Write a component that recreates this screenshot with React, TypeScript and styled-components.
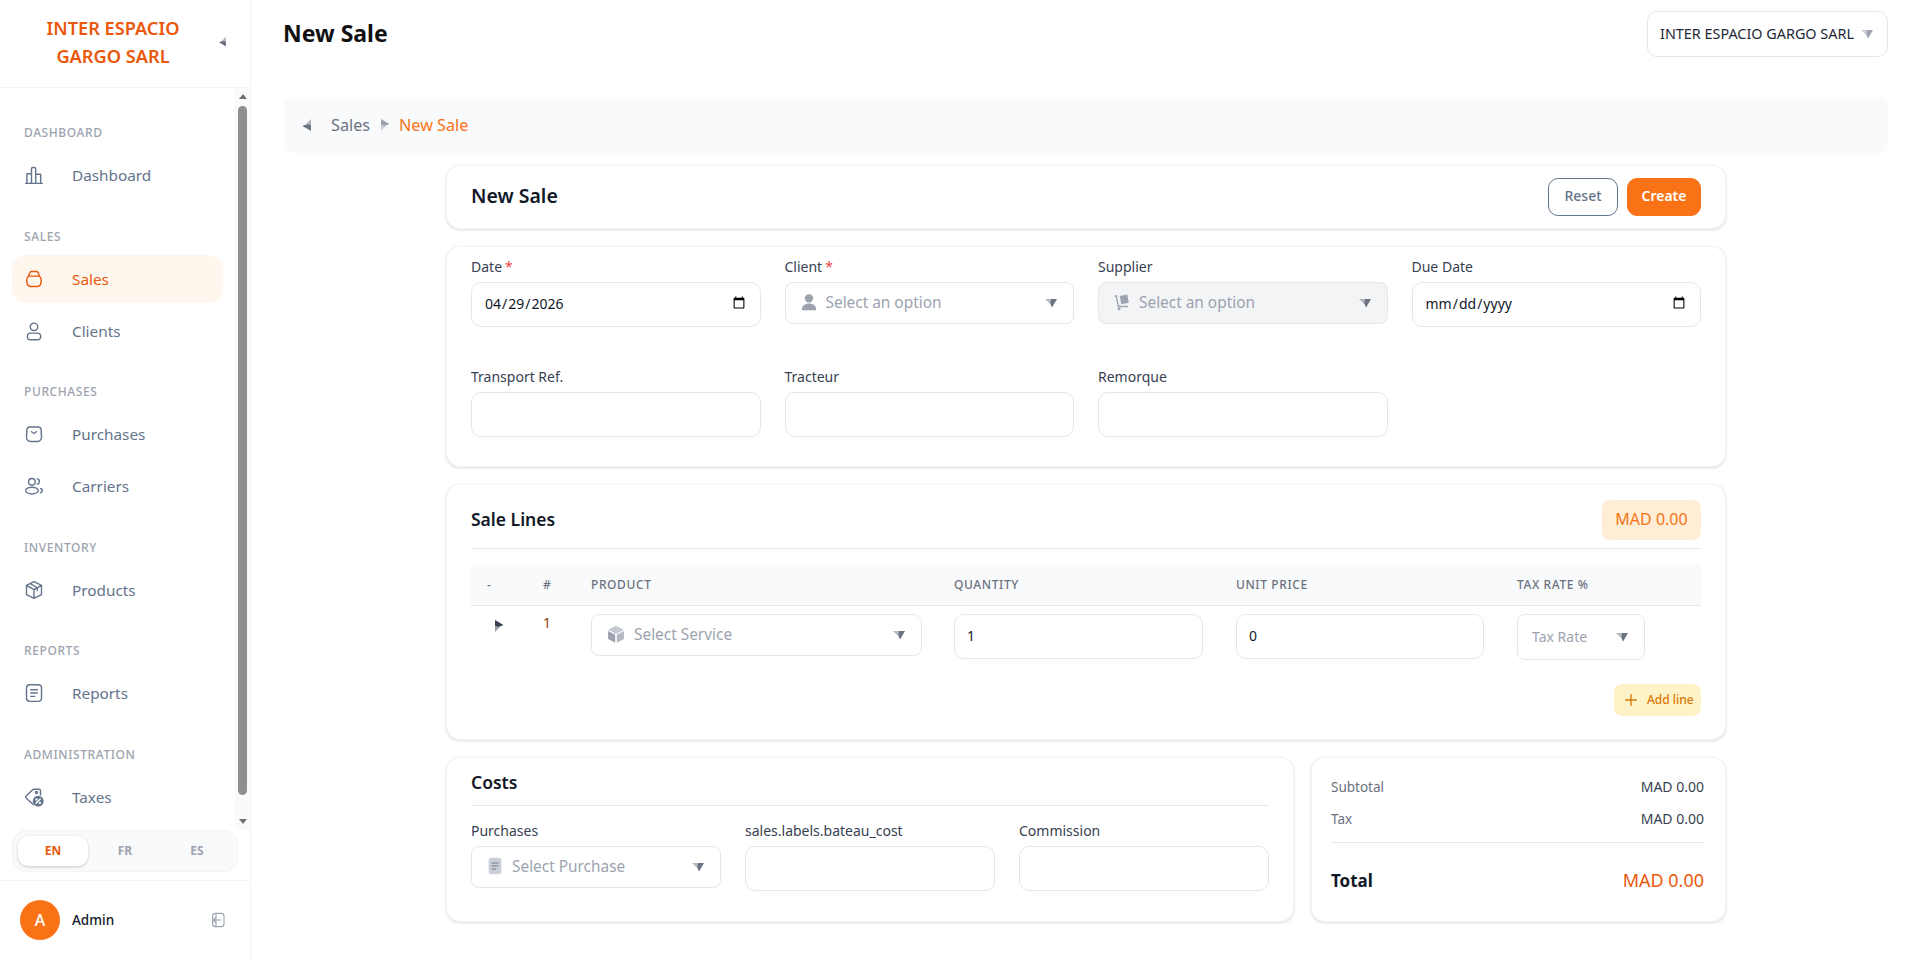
import React from "react";
import styled, { createGlobalStyle } from "styled-components";

const orange = "#f97316";
const deepOrange = "#ea580c";
const line = "#e5e7eb";

const GlobalStyle = createGlobalStyle`
  * { box-sizing: border-box; }
  html, body { margin: 0; padding: 0; background: #fff; }
  body {
    font-family: "Noto Sans", "Open Sans", Arial, sans-serif;
    color: #111827;
    overflow: hidden;
  }
`;

const Page = styled.div`
  display: flex;
  height: 970px;
  background: #fff;
`;

const Sidebar = styled.aside`
  display: flex;
  flex-direction: column;
  flex: 0 0 251px;
  height: 960px;
  border-right: 1px solid #f3f4f6;
`;

const Brand = styled.div`
  display: flex;
  align-items: center;
  height: 88px;
  flex: 0 0 88px;
  padding: 0 20px 4px 9px;
  border-bottom: 1px solid #f3f4f6;
`;

const BrandName = styled.div`
  flex: 1;
  text-align: center;
  font-size: 18.200px;
  line-height: 28px;
  font-weight: 600;
  color: ${deepOrange};
`;

const NavArea = styled.div`
  display: flex;
  height: 742px;
  flex: 0 0 742px;
`;

const Scroller = styled.nav`
  flex: 1;
  min-width: 0;
  overflow: hidden;
  padding: 37px 12px 0;
`;

const Rail = styled.div`
  display: grid;
  grid-template-rows: 17px 1fr 17px;
  justify-items: center;
  align-items: center;
  flex: 0 0 15px;
  background: #fafafa;
`;

const RailThumb = styled.div`
  align-self: start;
  width: 9px;
  height: 689px;
  margin-top: 1px;
  border-radius: 5px;
  background: #8f8f8f;
`;

const RailArrow = styled.div<{ $down?: boolean }>`
  width: 0;
  height: 0;
  border-left: 4.500px solid transparent;
  border-right: 4.500px solid transparent;
  border-top: ${(p) => (p.$down ? "5px solid #6f6f6f" : "0")};
  border-bottom: ${(p) => (p.$down ? "0" : "5px solid #6f6f6f")};
`;

const Section = styled.div`
  margin-bottom: 29.600px;
`;

const SectionLabel = styled.div`
  padding-left: 12px;
  margin-bottom: 10px;
  height: 16px;
  line-height: 16px;
  font-size: 12px;
  font-weight: 500;
  letter-spacing: 0.05em;
  color: #9ca3af;
`;

const NavItem = styled.a<{ $active?: boolean }>`
  display: flex;
  align-items: center;
  gap: 28px;
  width: 211px;
  height: 48px;
  margin-bottom: 4px;
  padding-left: 12px;
  border-radius: 14px;
  font-size: 15.300px;
  color: ${(p) => (p.$active ? deepOrange : "#64748b")};
  background: ${(p) => (p.$active ? "#fff7ed" : "transparent")};
`;

const LangBar = styled.div`
  display: grid;
  grid-template-columns: repeat(3, 70px);
  gap: 2px;
  height: 42px;
  margin: 0 12px;
  padding: 5px;
  width: 226px;
  flex: 0 0 42px;
  border: 1px solid #f3f4f6;
  border-radius: 14px;
  background: #f9fafb;
`;

const LangButton = styled.div<{ $active?: boolean }>`
  display: flex;
  align-items: center;
  justify-content: center;
  padding-bottom: 2px;
  border-radius: 10px;
  font-size: 12px;
  font-weight: 700;
  color: ${(p) => (p.$active ? deepOrange : "#9ca3af")};
  background: ${(p) => (p.$active ? "#fff" : "transparent")};
  box-shadow: ${(p) => (p.$active ? "0 1px 3px rgba(0,0,0,0.2)" : "none")};
`;

const UserRow = styled.div`
  display: flex;
  align-items: center;
  height: 80px;
  margin-top: 8px;
  padding: 0 24px 2px 20px;
  border-top: 1px solid #f3f4f6;
`;

const Avatar = styled.div`
  display: flex;
  align-items: center;
  justify-content: center;
  width: 40px;
  height: 40px;
  border-radius: 50%;
  background: ${orange};
  color: #fff;
  font-size: 16px;
  font-weight: 500;
`;

const UserName = styled.div`
  flex: 1;
  margin-left: 12px;
  font-size: 13.500px;
  font-weight: 500;
  color: #111827;
`;

const Main = styled.main`
  flex: 1;
  min-width: 0;
  padding: 11px 29px 0 33px;
`;

const TopRow = styled.div`
  display: flex;
  justify-content: space-between;
  height: 86px;
`;

const PageTitle = styled.h1`
  margin: 6px 0 0 -1px;
  font-size: 23px;
  line-height: 32px;
  font-weight: 700;
  color: #111;
`;

const CompanySelect = styled.div`
  display: flex;
  align-items: center;
  justify-content: space-between;
  width: 241px;
  height: 46px;
  padding: 0 12px 2px 12px;
  border: 1px solid ${line};
  border-radius: 10px;
  font-size: 14.400px;
  color: #1f2937;
`;

const Crumbs = styled.div`
  display: flex;
  align-items: center;
  gap: 6px;
  height: 56px;
  padding-left: 16px;
  border-radius: 8px;
  background: #f9fafb;
  font-size: 16.200px;
  color: #6b7280;
`;

const CrumbLink = styled.span`
  margin-left: 9px;
`;

const CrumbCurrent = styled.span`
  margin-left: 1px;
  color: ${orange};
`;

const Content = styled.div`
  display: flex;
  flex-direction: column;
  gap: 17px;
  width: 1280px;
  margin: 12px auto 0;
`;

const Card = styled.section`
  border: 1px solid #f3f4f6;
  border-radius: 14px;
  background: #fff;
  box-shadow: 0 1px 3px rgba(0, 0, 0, 0.14);
`;

const HeaderCard = styled(Card)`
  display: flex;
  align-items: center;
  justify-content: space-between;
  height: 64px;
  padding: 0 24px;
`;

const CardTitle = styled.h2`
  margin: 0 0 4px;
  font-size: 19.500px;
  font-weight: 600;
  color: #111827;
`;

const Actions = styled.div`
  display: flex;
  gap: 9px;
`;

const Button = styled.button<{ $primary?: boolean }>`
  height: 38px;
  padding: 0 0 3px;
  width: ${(p) => (p.$primary ? "74px" : "70px")};
  border: 1px solid ${(p) => (p.$primary ? orange : "#64748b")};
  border-radius: 10px;
  background: ${(p) => (p.$primary ? orange : "#fff")};
  color: ${(p) => (p.$primary ? "#fff" : "#64748b")};
  font-family: inherit;
  font-size: 14px;
  font-weight: ${(p) => (p.$primary ? 600 : 500)};
`;

const FormCard = styled(Card)`
  display: grid;
  grid-template-columns: repeat(4, 1fr);
  column-gap: 24px;
  row-gap: 40px;
  padding: 10px 24px 29px;
`;

const Label = styled.label`
  display: block;
  height: 20px;
  margin-bottom: 5px;
  font-size: 14px;
  line-height: 20px;
  color: #374151;
`;

const Required = styled.span`
  color: #ef4444;
  margin-left: 3px;
`;

const TextInput = styled.input`
  display: block;
  width: 100%;
  height: 45px;
  padding: 0 12px 3px;
  border: 1px solid ${line};
  border-radius: 10px;
  background: #fff;
  color: #111827;
  font-family: inherit;
  font-size: 14px;
  outline: none;
`;

const SelectBox = styled.div<{ $disabled?: boolean; $tall?: boolean }>`
  display: flex;
  align-items: center;
  gap: 8px;
  width: 100%;
  height: ${(p) => (p.$tall ? "46px" : "42px")};
  padding: 0 14px 2px 14px;
  border: 1px solid ${line};
  border-radius: 8px;
  background: ${(p) => (p.$disabled ? "#f3f4f6" : "#fff")};
  font-size: ${(p) => (p.$tall ? "14px" : "15.400px")};
  color: #9ca3af;
`;

const SelectText = styled.span`
  flex: 1;
`;

const LinesCard = styled(Card)`
  height: 256px;
  padding: 15px 24px 0;
`;

const CardHead = styled.div`
  display: flex;
  align-items: center;
  justify-content: space-between;
  height: 49px;
  border-bottom: 1px solid ${line};
  padding-bottom: 8px;
`;

const SectionTitle = styled.h3`
  margin: 0 0 2px;
  font-size: 17.500px;
  font-weight: 600;
  color: #111827;
`;

const TotalBadge = styled.div`
  display: flex;
  align-items: center;
  justify-content: center;
  width: 99px;
  height: 40px;
  padding-bottom: 2px;
  border-radius: 8px;
  background: #ffedd5;
  color: ${orange};
  font-size: 16px;
`;

const LinesGrid = styled.div`
  display: grid;
  grid-template-columns: 56px 64px 363px 282px 281px 184px;
`;

const HeadRow = styled(LinesGrid)`
  height: 41px;
  margin-top: 16px;
  padding-bottom: 2px;
  align-items: center;
  background: #f9fafb;
  border-bottom: 1px solid ${line};
  font-size: 12px;
  font-weight: 500;
  letter-spacing: 0.05em;
  color: #6b7280;
`;

const HeadCell = styled.div<{ $pad?: boolean }>`
  padding-left: ${(p) => (p.$pad ? "16px" : "0")};
`;

const BodyRow = styled(LinesGrid)`
  padding-top: 8px;
`;

const ExpandCell = styled.div`
  padding: 3px 0 0 19px;
`;

const IndexCell = styled.div`
  padding: 0 0 0 16px;
  font-size: 14px;
  line-height: 18px;
  color: #92400e;
`;

const FieldCell = styled.div<{ $width: number }>`
  width: ${(p) => p.$width}px;
`;

const AddRow = styled.div`
  display: flex;
  justify-content: flex-end;
  margin-top: 24px;
`;

const AddButton = styled.button`
  display: flex;
  align-items: center;
  gap: 8px;
  width: 87px;
  height: 32px;
  padding: 0 0 1px 9px;
  border: 0;
  border-radius: 8px;
  background: #fef3c7;
  color: #d97706;
  font-family: inherit;
  font-size: 12px;
  font-weight: 500;
`;

const BottomRow = styled.div`
  display: flex;
  gap: 17px;
`;

const CostsCard = styled(Card)`
  flex: 0 0 848px;
  height: 165px;
  padding: 9px 24px 0;
`;

const CostsHead = styled.div`
  display: flex;
  align-items: center;
  height: 39px;
  padding-bottom: 6px;
  border-bottom: 1px solid ${line};
`;

const CostsGrid = styled.div`
  display: grid;
  grid-template-columns: repeat(3, 1fr);
  gap: 24px;
  margin-top: 15px;
`;

const TotalsCard = styled(Card)`
  flex: 1;
  height: 165px;
  padding: 13px 21px 0 19px;
`;

const TotalLine = styled.div`
  display: flex;
  align-items: center;
  justify-content: space-between;
  height: 32px;
  padding-bottom: 1px;
  font-size: 14px;
  color: #374151;
`;

const TotalName = styled.span`
  font-size: 13.500px;
  color: #6b7280;
`;

const GrandLine = styled.div`
  display: flex;
  align-items: center;
  justify-content: space-between;
  height: 38px;
  margin-top: 18px;
  font-size: 18px;
  color: ${deepOrange};
`;

const GrandName = styled.span`
  font-size: 17px;
  font-weight: 700;
  color: #111827;
`;

const TotalsRule = styled.div`
  height: 1px;
  margin-top: 7px;
  background: ${line};
`;

const CaretSvg = styled.svg<{ $rot: number }>`
  flex: none;
  transform: rotate(${(p) => p.$rot}deg);
`;

// two-tone caret, the lighter wedge sits on the leading side
function Caret({ dir, size = 16, color = "#6b7280" }: { dir: "left" | "right" | "down"; size?: number; color?: string }) {
  const rot = dir === "down" ? 0 : dir === "right" ? -90 : 90;
  return (
    <CaretSvg $rot={rot} width={size} height={size} viewBox="0 0 24 24">
      <path d="M3 7.500h10l-2 7.500z" fill={color} opacity="0.5" />
      <path d="M21 7.500h-9l-1 6.500 2 5.500c.3.4.7.4 1 0z" fill={color} />
    </CaretSvg>
  );
}

const Icon = styled.svg`
  flex: none;
  fill: none;
  stroke: currentColor;
  stroke-width: 1.7;
  stroke-linecap: round;
  stroke-linejoin: round;
`;

function BarsIcon() {
  return (
    <Icon width="20" height="20" viewBox="0 0 24 24">
      <path d="M2 22h20M3.500 22V10.500h5.500V22M9 22V4.500c0-1 .5-1.500 1.500-1.500h2c1 0 1.500.5 1.500 1.500V22M14 22V11h6v11" />
    </Icon>
  );
}

function BasketIcon() {
  return (
    <Icon width="20" height="20" viewBox="0 0 24 24">
      <path d="M6 8.500C3.500 9.500 3 12 3.500 16c.4 3 2 5 5 5h7c3 0 4.600-2 5-5 .5-4 0-6.500-2.500-7.500M5.500 8.500h13L17 4.500c-.3-.8-1-1.500-2-1.500H9c-1 0-1.700.7-2 1.500z" />
    </Icon>
  );
}

function UserIcon() {
  return (
    <Icon width="20" height="20" viewBox="0 0 24 24">
      <circle cx="12" cy="7" r="4.500" />
      <rect x="4" y="14.500" width="16" height="8" rx="4" />
    </Icon>
  );
}

function BagIcon() {
  return (
    <Icon width="20" height="20" viewBox="0 0 24 24">
      <path d="M7 3.500h10c2 0 3.200 1 3.500 3l.5 9c.2 3-1.800 5.500-5 5.500H8c-3.200 0-5.200-2.500-5-5.500l.5-9c.3-2 1.500-3 3.500-3z" />
      <path d="M9 9c.8 1.500 1.800 2 3 2s2.200-.5 3-2" />
    </Icon>
  );
}

function UsersIcon() {
  return (
    <Icon width="20" height="20" viewBox="0 0 24 24">
      <circle cx="9.500" cy="7" r="4" />
      <ellipse cx="9.500" cy="17.500" rx="7.500" ry="4" />
      <path d="M16 3.500c1.500.3 2.500 1.700 2.500 3.200s-1 2.800-2.500 3.200M20 15c1.300.5 2 1.500 2 2.500s-.7 2-2 2.500" />
    </Icon>
  );
}

function BoxIcon() {
  return (
    <Icon width="20" height="20" viewBox="0 0 24 24">
      <path d="M12 2l9 4.500v11L12 22l-9-4.500v-11zM3 6.500l9 5 9-5M12 11.500V22M7.500 4.300l8.500 5v3.200" />
    </Icon>
  );
}

function ReportIcon() {
  return (
    <Icon width="20" height="20" viewBox="0 0 24 24">
      <rect x="3" y="2" width="18" height="20" rx="4" />
      <path d="M8 8h8M8 12h8M8 16h5" />
    </Icon>
  );
}

function TaxIcon() {
  return (
    <Icon width="20" height="20" viewBox="0 0 24 24">
      <path d="M11 21L2.500 13.200c-.7-.7-.7-1.600 0-2.300L10 3.500c.6-.6 1.200-.8 2-.8h6c1 0 1.800.8 1.800 1.800v5" />
      <circle cx="15" cy="6.500" r="1.300" />
      <circle cx="17" cy="17" r="6.500" fill="currentColor" stroke="none" />
      <path d="M14.500 19.500l5-5" stroke="#fff" />
      <circle cx="15" cy="15" r=".6" stroke="#fff" />
      <circle cx="19" cy="19" r=".6" stroke="#fff" />
    </Icon>
  );
}

const LogoutSvg = styled(Icon)`
  color: #9ca3af;
`;

function LogoutIcon() {
  return (
    <LogoutSvg width="16" height="16" viewBox="0 0 24 24">
      <rect x="4" y="2" width="17" height="20" rx="4" />
      <path d="M9 2v20" />
      <path d="M16 12H5M8 9l-3 3 3 3" />
    </LogoutSvg>
  );
}

const SolidIcon = styled.svg`
  flex: none;
`;

function PersonGlyph() {
  return (
    <SolidIcon width="18" height="18" viewBox="0 0 24 24" fill="#9ca3af">
      <circle cx="12" cy="7" r="5.500" />
      <path d="M2.500 22c0-5 4-8 9.500-8s9.500 3 9.500 8c0 .6-.4 1-1 1h-17c-.6 0-1-.4-1-1z" />
    </SolidIcon>
  );
}

function TrolleyGlyph() {
  return (
    <SolidIcon width="18" height="18" viewBox="0 0 24 24" fill="#9ca3af">
      <path d="M2 3h3l3 14h12v2H6.500L3.500 5H2z" />
      <circle cx="8" cy="21" r="2" />
      <path d="M9 4l10-2 2 11-10 2z" />
    </SolidIcon>
  );
}

function CubeGlyph() {
  return (
    <SolidIcon width="20" height="20" viewBox="0 0 24 24">
      <path d="M12 2l9.500 5L12 12 2.500 7z" fill="#c4c9d1" />
      <path d="M2.500 8.500L11 13v9.500l-8.500-4.500z" fill="#9ca3af" />
      <path d="M13 13l8.500-4.500V18L13 22.500z" fill="#b4bac4" />
    </SolidIcon>
  );
}

function DocGlyph() {
  return (
    <SolidIcon width="18" height="18" viewBox="0 0 24 24">
      <rect x="3.500" y="1" width="17" height="22" rx="4" fill="#cbd0d8" />
      <path d="M8 8h8M8 12h8M8 16h5" stroke="#8f96a3" strokeWidth="2" strokeLinecap="round" />
    </SolidIcon>
  );
}

function PlusIcon() {
  return (
    <svg width="16" height="16" viewBox="0 0 24 24" fill="none" stroke="#d97706" strokeWidth="2" strokeLinecap="round">
      <path d="M12 4v16M4 12h16" />
    </svg>
  );
}

const navSections = [
  { label: "DASHBOARD", items: [{ name: "Dashboard", icon: <BarsIcon /> }] },
  { label: "SALES", items: [{ name: "Sales", icon: <BasketIcon />, active: true }, { name: "Clients", icon: <UserIcon /> }] },
  { label: "PURCHASES", items: [{ name: "Purchases", icon: <BagIcon /> }, { name: "Carriers", icon: <UsersIcon /> }] },
  { label: "INVENTORY", items: [{ name: "Products", icon: <BoxIcon /> }] },
  { label: "REPORTS", items: [{ name: "Reports", icon: <ReportIcon /> }] },
  { label: "ADMINISTRATION", items: [{ name: "Taxes", icon: <TaxIcon /> }] },
];

function Field({ label, required, children }: { label: string; required?: boolean; children: React.ReactNode }) {
  return (
    <div>
      <Label>
        {label}
        {required && <Required>*</Required>}
      </Label>
      {children}
    </div>
  );
}

function Select({ icon, text, disabled, tall }: { icon?: React.ReactNode; text: string; disabled?: boolean; tall?: boolean }) {
  return (
    <SelectBox $disabled={disabled} $tall={tall}>
      {icon}
      <SelectText>{text}</SelectText>
      <Caret dir="down" />
    </SelectBox>
  );
}

export default function App() {
  return (
    <>
      <GlobalStyle />
      <Page>
        <Sidebar>
          <Brand>
            <BrandName>
              INTER ESPACIO
              <br />
              GARGO SARL
            </BrandName>
            <Caret dir="left" size={13} color="#6b7280" />
          </Brand>
          <NavArea>
            <Scroller>
              {navSections.map((section) => (
                <Section key={section.label}>
                  <SectionLabel>{section.label}</SectionLabel>
                  {section.items.map((item) => (
                    <NavItem key={item.name} $active={"active" in item && item.active}>
                      {item.icon}
                      {item.name}
                    </NavItem>
                  ))}
                </Section>
              ))}
            </Scroller>
            <Rail>
              <RailArrow />
              <RailThumb />
              <RailArrow $down />
            </Rail>
          </NavArea>
          <LangBar>
            <LangButton $active>EN</LangButton>
            <LangButton>FR</LangButton>
            <LangButton>ES</LangButton>
          </LangBar>
          <UserRow>
            <Avatar>A</Avatar>
            <UserName>Admin</UserName>
            <LogoutIcon />
          </UserRow>
        </Sidebar>

        <Main>
          <TopRow>
            <PageTitle>New Sale</PageTitle>
            <CompanySelect>
              INTER ESPACIO GARGO SARL
              <Caret dir="down" color="#9ca3af" />
            </CompanySelect>
          </TopRow>

          <Crumbs>
            <Caret dir="left" />
            <CrumbLink>Sales</CrumbLink>
            <Caret dir="right" color="#9ca3af" />
            <CrumbCurrent>New Sale</CrumbCurrent>
          </Crumbs>

          <Content>
            <HeaderCard>
              <CardTitle>New Sale</CardTitle>
              <Actions>
                <Button>Reset</Button>
                <Button $primary>Create</Button>
              </Actions>
            </HeaderCard>

            <FormCard>
              <Field label="Date" required>
                <TextInput type="date" defaultValue="2026-04-29" />
              </Field>
              <Field label="Client" required>
                <Select icon={<PersonGlyph />} text="Select an option" />
              </Field>
              <Field label="Supplier">
                <Select icon={<TrolleyGlyph />} text="Select an option" disabled />
              </Field>
              <Field label="Due Date">
                <TextInput type="date" />
              </Field>
              <Field label="Transport Ref.">
                <TextInput />
              </Field>
              <Field label="Tracteur">
                <TextInput />
              </Field>
              <Field label="Remorque">
                <TextInput />
              </Field>
            </FormCard>

            <LinesCard>
              <CardHead>
                <SectionTitle>Sale Lines</SectionTitle>
                <TotalBadge>MAD 0.00</TotalBadge>
              </CardHead>
              <HeadRow>
                <HeadCell $pad>-</HeadCell>
                <HeadCell $pad>#</HeadCell>
                <HeadCell>PRODUCT</HeadCell>
                <HeadCell>QUANTITY</HeadCell>
                <HeadCell>UNIT PRICE</HeadCell>
                <HeadCell>TAX RATE %</HeadCell>
              </HeadRow>
              <BodyRow>
                <ExpandCell>
                  <Caret dir="right" color="#374151" />
                </ExpandCell>
                <IndexCell>1</IndexCell>
                <FieldCell $width={331}>
                  <Select icon={<CubeGlyph />} text="Select Service" />
                </FieldCell>
                <FieldCell $width={249}>
                  <TextInput defaultValue="1" />
                </FieldCell>
                <FieldCell $width={248}>
                  <TextInput defaultValue="0" />
                </FieldCell>
                <FieldCell $width={128}>
                  <Select text="Tax Rate" tall />
                </FieldCell>
              </BodyRow>
              <AddRow>
                <AddButton>
                  <PlusIcon />
                  Add line
                </AddButton>
              </AddRow>
            </LinesCard>

            <BottomRow>
              <CostsCard>
                <CostsHead>
                  <SectionTitle>Costs</SectionTitle>
                </CostsHead>
                <CostsGrid>
                  <Field label="Purchases">
                    <Select icon={<DocGlyph />} text="Select Purchase" />
                  </Field>
                  <Field label="sales.labels.bateau_cost">
                    <TextInput />
                  </Field>
                  <Field label="Commission">
                    <TextInput />
                  </Field>
                </CostsGrid>
              </CostsCard>
              <TotalsCard>
                <TotalLine>
                  <TotalName>Subtotal</TotalName>
                  MAD 0.00
                </TotalLine>
                <TotalLine>
                  <TotalName>Tax</TotalName>
                  MAD 0.00
                </TotalLine>
                <TotalsRule />
                <GrandLine>
                  <GrandName>Total</GrandName>
                  MAD 0.00
                </GrandLine>
              </TotalsCard>
            </BottomRow>
          </Content>
        </Main>
      </Page>
    </>
  );
}
